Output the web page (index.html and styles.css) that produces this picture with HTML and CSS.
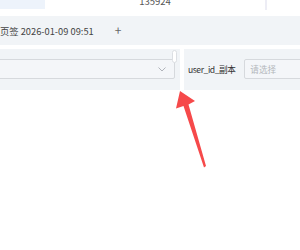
FILE: index.html
```html
<!DOCTYPE html>
<html lang="zh-CN">
<head>
<meta charset="utf-8">
<link rel="stylesheet" href="styles.css">
</head>
<body>
<div class="page">
  <div class="top-row">
    <div class="cell-blue"></div>
    <div class="cell-num"><span class="num">135924</span></div>
    <div class="col-line"></div>
    <div class="cell-rest"></div>
  </div>
  <div class="tabs">
    <span class="tab-title">页签 2026-01-09 09:51</span>
    <span class="tab-add">+</span>
  </div>
  <div class="panels">
    <div class="panel panel-left">
      <div class="select">
        <svg class="chevron" width="8" height="5" viewBox="0 0 8 5"><path d="M0.5 0.5 L4 4 L7.5 0.5" fill="none" stroke="#a8acb2" stroke-width="0.9"/></svg>
      </div>
      <div class="thumb"></div>
    </div>
    <div class="panel panel-right">
      <span class="label">user_id_副本</span>
      <div class="input"><span class="placeholder">请选择</span></div>
    </div>
  </div>
  <svg class="arrow" width="300" height="250" viewBox="0 0 300 250">
    <polygon points="180,91 195,101 188.5,104.5 206,166 204,167.5 183.5,106 176,108.5" fill="#f6494a"/>
  </svg>
</div>
</body>
</html>
```
FILE: styles.css
```css
html, body {
  margin: 0;
  padding: 0;
  background: #ffffff;
}
.page {
  position: relative;
  width: 300px;
  height: 250px;
  overflow: hidden;
  font-family: "Noto Sans CJK SC", "Noto Sans", sans-serif;
  color: #333;
}
.top-row {
  display: flex;
  height: 10px;
}
.cell-blue {
  width: 45px;
  height: 9px;
  background: #edf3fb;
}
.cell-num {
  flex: 1;
  display: flex;
  justify-content: center;
  align-items: flex-end;
  overflow: hidden;
  height: 10px;
}
.num {
  font-size: 9.5px;
  line-height: 10px;
  color: #555;
  margin-bottom: 4px;
}
.col-line {
  width: 2px;
  background: #ededf5;
}
.cell-rest {
  flex: 0 0 33px;
}
.tabs {
  margin-top: 6px;
  height: 29px;
  background: #f1f4f7;
  display: flex;
  align-items: center;
  font-size: 9.3px;
  color: #444;
}
.tab-title {
  margin-left: 0;
}
.tab-add {
  margin-left: 21px;
  font-size: 12px;
  color: #666;
  line-height: 1;
  margin-top: -1px;
}
.panels {
  margin-top: 4px;
  display: flex;
  gap: 4px;
  height: 41px;
}
.panel {
  background: #f1f4f7;
  position: relative;
}
.panel-left {
  width: 180px;
  flex: 0 0 180px;
}
.panel-right {
  flex: 1;
  display: flex;
  align-items: center;
  padding-left: 4px;
  padding-bottom: 1px;
  gap: 9px;
}
.select {
  margin: 10px 5px 0 -2px;
  height: 20px;
  box-sizing: border-box;
  border: 1px solid #d6d9dd;
  border-radius: 2px;
  background: #f4f6f9;
  display: flex;
  align-items: center;
  justify-content: flex-end;
  padding-right: 8px;
}
.chevron {
  display: block;
}
.thumb {
  position: absolute;
  right: 3px;
  top: 1px;
  width: 5px;
  height: 13px;
  box-sizing: border-box;
  background: #ffffff;
  border: 1px solid #dcdfe3;
  border-radius: 3px;
}
.label {
  font-size: 8.6px;
  letter-spacing: -0.45px;
  color: #333;
  white-space: nowrap;
}
.input {
  flex: 0 0 80px;
  height: 20px;
  box-sizing: border-box;
  border: 1px solid #d6d9dd;
  border-radius: 2px;
  background: #f4f6f9;
  display: flex;
  align-items: center;
  padding-left: 5px;
}
.placeholder {
  font-size: 8.6px;
  color: #b3b6bb;
}
.arrow {
  position: absolute;
  left: 0;
  top: 0;
  pointer-events: none;
}
```
